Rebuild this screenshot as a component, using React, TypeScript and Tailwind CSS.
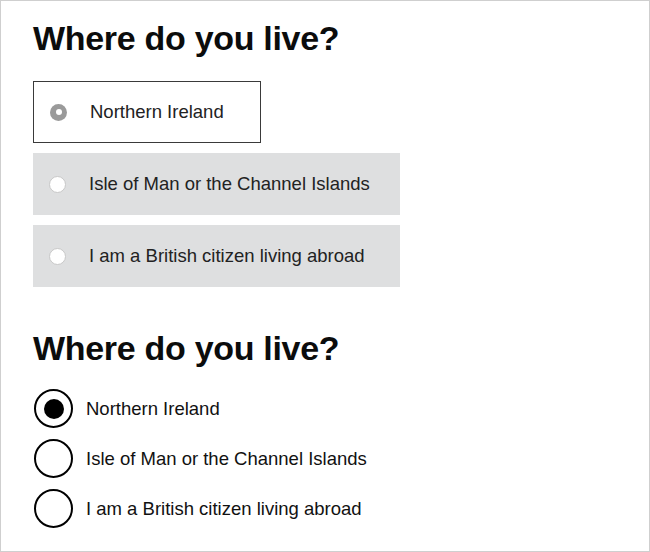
import React from "react";

const options = [
  "Northern Ireland",
  "Isle of Man or the Channel Islands",
  "I am a British citizen living abroad",
];

// Old style: boxed options, the selected one white with a border
const OldRadios: React.FC = () => (
  <div className="flex flex-col gap-[10px]">
    {options.map((label, i) => {
      const selected = i === 0;
      return (
        <div
          key={label}
          className={
            selected
              ? "flex h-[62px] w-[228px] items-center border border-[#3a3a3a] bg-white"
              : "flex h-[62px] w-[367px] items-center bg-[#dedfe0]"
          }
        >
          <span className="ml-[16px] flex h-[17px] w-[17px] items-center justify-center rounded-full">
            {selected ? (
              <span className="flex h-[17px] w-[17px] items-center justify-center rounded-full bg-[#9a9a9a]">
                <span className="h-[6px] w-[6px] rounded-full bg-white" />
              </span>
            ) : (
              <span className="h-[17px] w-[17px] rounded-full border border-[#c8c8c8] bg-white" />
            )}
          </span>
          <span className="ml-[23px] text-[18.5px] text-[#222]">{label}</span>
        </div>
      );
    })}
  </div>
);

// New style: large circles, plain labels
const NewRadios: React.FC = () => (
  <div className="flex flex-col gap-[11px]">
    {options.map((label, i) => (
      <div key={label} className="flex items-center">
        <span className="flex h-[39px] w-[39px] items-center justify-center rounded-full border-2 border-black bg-white">
          {i === 0 && <span className="h-[20px] w-[20px] rounded-full bg-black" />}
        </span>
        <span className="ml-[13px] text-[18.5px] text-[#111]">{label}</span>
      </div>
    ))}
  </div>
);

export default function App() {
  return (
    <div
      className="h-[552px] w-[650px] border border-[#cfcfcf] bg-white pl-[32px] text-[#0b0c0c]"
      style={{ fontFamily: '"Liberation Sans", Arial, sans-serif' }}
    >
      <h1 className="mt-[14px] text-[34px] font-bold leading-[46px] tracking-[-0.3px]">
        Where do you live?
      </h1>
      <div className="mt-[20px]">
        <OldRadios />
      </div>
      <h1 className="mt-[38px] text-[34px] font-bold leading-[46px] tracking-[-0.3px]">
        Where do you live?
      </h1>
      <div className="mt-[18px] pl-[1px]">
        <NewRadios />
      </div>
    </div>
  );
}
